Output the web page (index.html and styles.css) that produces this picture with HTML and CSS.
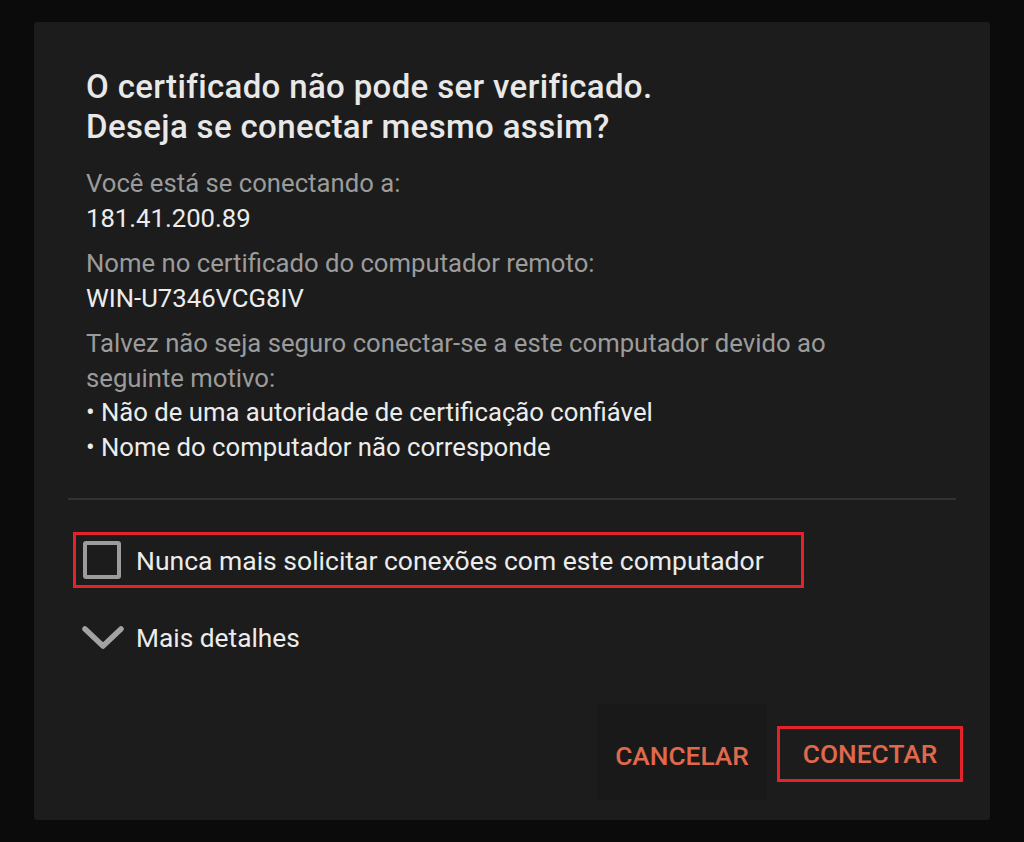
FILE: index.html
```html
<!DOCTYPE html>
<html lang="pt-BR">
<head>
    <meta charset="UTF-8">
    <meta name="viewport" content="width=device-width, initial-scale=1.0">
    <title>Certificado</title>
    <link rel="stylesheet" href="styles.css">
</head>
<body>
    <div class="dialog">
        <h1 class="title">O certificado não pode ser verificado.<br>Deseja se conectar mesmo assim?</h1>

        <div class="info">
            <div class="group">
                <p class="label">Você está se conectando a:</p>
                <p class="value">181.41.200.89</p>
            </div>
            <div class="group">
                <p class="label">Nome no certificado do computador remoto:</p>
                <p class="value">WIN-U7346VCG8IV</p>
            </div>
            <div class="group">
                <p class="label">Talvez não seja seguro conectar-se a este computador devido ao seguinte motivo:</p>
                <p class="value">• Não de uma autoridade de certificação confiável</p>
                <p class="value">• Nome do computador não corresponde</p>
            </div>
        </div>

        <div class="divider"></div>

        <label class="check-row highlight">
            <span class="checkbox"></span>
            <span>Nunca mais solicitar conexões com este computador</span>
        </label>

        <div class="details">
            <svg class="chevron" width="42" height="24" viewBox="0 0 42 24">
                <path d="M3 3 L21 20 L39 3" fill="none" stroke="#a3a3a3" stroke-width="5.5" stroke-linecap="round" stroke-linejoin="round"/>
            </svg>
            <span>Mais detalhes</span>
        </div>

        <div class="actions">
            <button class="btn btn-cancel">CANCELAR</button>
            <button class="btn highlight">CONECTAR</button>
        </div>
    </div>
</body>
</html>
```

FILE: styles.css
```css
/* General Styles */
* {
    margin: 0;
    padding: 0;
    box-sizing: border-box;
    font-family: 'Roboto', 'Noto Sans', sans-serif;
}

body {
    background-color: #0b0b0b;
    width: 1024px;
    height: 842px;
    overflow: hidden;
    padding: 22px 34px 0 34px;
}

.dialog {
    width: 956px;
    height: 798px;
    background: #1c1c1c;
    border-radius: 3px;
    padding: 45px 34px 0 34px;
    display: flex;
    flex-direction: column;
}

.title {
    font-size: 33px;
    font-weight: 500;
    letter-spacing: 0.35px;
    line-height: 40px;
    color: #e8e8e8;
    padding-left: 18px;
}

.info {
    padding-left: 18px;
    margin-top: 19px;
    display: flex;
    flex-direction: column;
    gap: 11px;
}

.group p {
    font-size: 25.7px;
    line-height: 34.5px;
}

.label {
    color: #9b9b9b;
    width: 800px;
}

.value {
    color: #ececec;
}

.divider {
    height: 2px;
    background: #323232;
    margin-top: 34px;
}

.highlight {
    border: 3px solid #e3222b;
}

.check-row {
    display: flex;
    align-items: center;
    gap: 15px;
    width: 731px;
    height: 56px;
    margin: 32px 0 0 5px;
    padding-left: 7px;
    font-size: 26.5px;
    color: #ececec;
}

.checkbox {
    width: 38px;
    height: 38px;
    border: 4px solid #9c9c9c;
    border-radius: 3px;
}

.details {
    display: flex;
    align-items: center;
    gap: 12px;
    height: 32px;
    margin: 34px 0 0 14px;
    font-size: 26.3px;
    color: #ececec;
}

.actions {
    display: flex;
    justify-content: flex-end;
    align-items: center;
    gap: 10px;
    margin: 50px -7px 0 0;
}

.btn {
    background: transparent;
    border: none;
    color: #e0694c;
    font-size: 26.3px;
    font-weight: 500;
}

.btn-cancel {
    background: #191919;
    width: 170px;
    height: 96px;
    padding-top: 7px;
}

.btn.highlight {
    border: 3px solid #e3222b;
    width: 186px;
    height: 56px;
    margin-top: 4px;
}
```
